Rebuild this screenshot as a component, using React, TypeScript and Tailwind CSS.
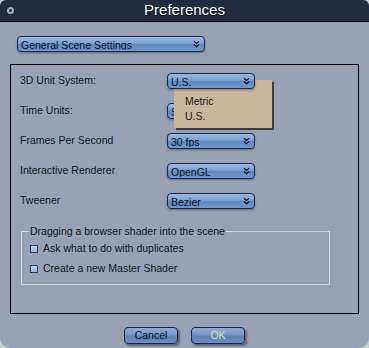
import React from 'react';

function Chevrons() {
  return (
    <svg width="7" height="8" viewBox="0 0 7 8" className="shrink-0">
      <path d="M1 1.2l2.5 2.3L6 1.2M1 4.5l2.5 2.3L6 4.5" fill="none" stroke="#101828" strokeWidth={1.2} />
    </svg>
  );
}

function Select({ value, w = 'w-[88px]', top }: { value: string; w?: string; top?: boolean }) {
  return (
    <div
      className={`${w} ${top ? 'relative z-20' : ''} h-[16px] flex items-center justify-between pl-[3px] pr-[4px] rounded-[4px] border border-[#1b2c4d] bg-[linear-gradient(to_bottom,#9db9df_0%,#7ea0cf_45%,#5f88c1_55%,#7198cd_100%)] shadow-[0_1px_2px_rgba(20,30,50,0.45)] text-[10.5px] leading-none text-[#0c1424]`}
    >
      <span className="truncate pt-[2px]">{value}</span>
      <Chevrons />
    </div>
  );
}

function Row({ label, value, open, children }: { label: string; value: string; open?: boolean; children?: React.ReactNode }) {
  return (
    <div className="relative flex items-center h-[16px]">
      <span className="w-[147px] text-[10.5px] text-[#101624]">{label}</span>
      <Select value={value} top={open} />
      {children}
    </div>
  );
}

function Check({ label }: { label: string }) {
  return (
    <div className="flex items-center gap-[5px] h-[14px]">
      <span className="w-[8px] h-[8px] border border-[#21406f] bg-[linear-gradient(to_bottom,#c7d3e6,#9fb1cc)]" />
      <span className="text-[10.5px] text-[#101624]">{label}</span>
    </div>
  );
}

function Button({ label, ok }: { label: string; ok?: boolean }) {
  return (
    <div
      className={`w-[54px] h-[17px] flex items-center justify-center rounded-[4px] border border-[#17284a] bg-[linear-gradient(to_bottom,#92acd2_0%,#7595c4_45%,#5d80b6_55%,#6d8fc2_100%)] shadow-[2px_2px_2px_rgba(20,28,45,0.45)] text-[10.5px] ${ok ? 'text-[#d3e39a]' : 'text-[#0c1424]'}`}
    >
      {label}
    </div>
  );
}

export default function App() {
  return (
    <div className="w-[369px] h-[348px] bg-[#c9ccd2] font-['Liberation_Sans',Arial,sans-serif]">
      <div className="w-full h-full flex flex-col bg-[#98a2b4] rounded-t-[6px] rounded-b-[10px] overflow-hidden">
        {/* title bar */}
        <div className="relative h-[22px] shrink-0 flex items-center justify-center bg-[#222b3f] border-b border-black">
          <span className="absolute left-[7px] top-[7px] w-[7px] h-[7px] rounded-full border-[2px] border-[#a8adb8] bg-[#2a3142]" />
          <span className="text-[15px] text-white [text-shadow:0_1px_1px_rgba(0,0,0,0.9)]">Preferences</span>
        </div>

        <div className="flex flex-col px-[10px]">
          <div className="pt-[14px] pl-[7px]">
            <Select value="General Scene Settings" w="w-[188px]" />
          </div>

          {/* settings panel */}
          <div className="mt-[12px] h-[250px] border border-black pl-[9px] pt-[8px] flex flex-col">
            <div className="flex flex-col gap-[14px]">
              <Row label="3D Unit System:" value="U.S." open>
                <div className="absolute left-[154px] top-[7px] z-10 w-[98px] h-[48px] bg-[#cbb69d] shadow-[2px_2px_0_rgba(30,25,20,0.75)] flex flex-col pl-[11px] pt-[15px] gap-[2px] text-[10.5px] text-[#1b1a18]">
                  <span className="leading-[13px]">Metric</span>
                  <span className="leading-[13px]">U.S.</span>
                </div>
              </Row>
              <Row label="Time Units:" value="Seconds" />
              <Row label="Frames Per Second" value="30 fps" />
              <Row label="Interactive Renderer" value="OpenGL" />
              <Row label="Tweener" value="Bezier" />
            </div>

            <fieldset className="mt-[15px] ml-[1px] w-[309px] h-[61px] border border-[#d2d8e2] pl-[8px]">
              <legend className="ml-[-1px] px-[1px] text-[10.5px] text-[#101624]">Dragging a browser shader into the scene</legend>
              <div className="flex flex-col gap-[6px] pt-[2px]">
                <Check label="Ask what to do with duplicates" />
                <Check label="Create a new Master Shader" />
              </div>
            </fieldset>
          </div>

          <div className="mt-[13px] flex justify-center gap-[13px]">
            <Button label="Cancel" />
            <Button label="OK" ok />
          </div>
        </div>
      </div>
    </div>
  );
}
